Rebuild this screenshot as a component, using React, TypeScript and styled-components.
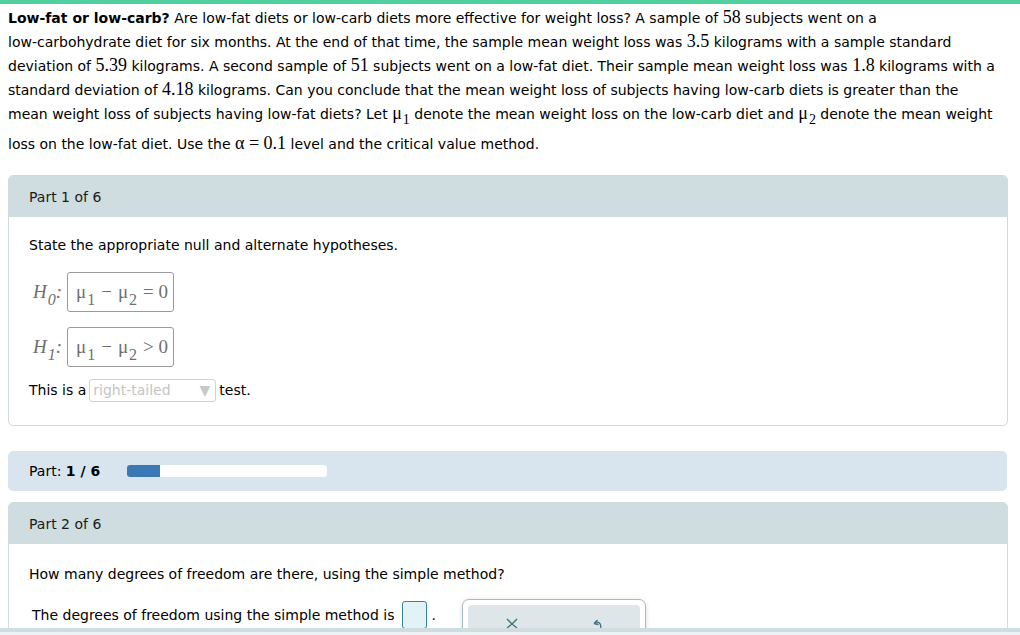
import styled, { createGlobalStyle } from "styled-components"

const GlobalStyle = createGlobalStyle`
    body {
        margin: 0;
        background: #ffffff;
        font-family: "DejaVu Sans", Verdana, sans-serif;
        font-size: 14px;
        color: #000000;
    }
`

const Page = styled.div`
    display: flex;
    flex-direction: column;
    width: 1020px;
    height: 635px;
    overflow: hidden;
`

const TopBar = styled.div`
    height: 4px;
    background: #4fd09e;
    flex-shrink: 0;
`

const Problem = styled.div`
    display: flex;
    flex-direction: column;
    padding: 1px 0 0 8px;
    line-height: 24px;
`

const TextLine = styled.div<{ $tall?: boolean }>`
    white-space: nowrap;
    height: ${(p) => (p.$tall ? 30 : 24)}px;
`

const Num = styled.span`
    font-family: "Liberation Serif", "Times New Roman", serif;
    font-size: 18px;
`

const Sub = styled.sub<{ $size?: number; $drop?: number }>`
    font-size: ${(p) => p.$size ?? 13}px;
    vertical-align: -${(p) => p.$drop ?? 5}px;
    line-height: 0;
    margin-left: 1px;
`

const Card = styled.section<{ $top: number }>`
    margin: ${(p) => p.$top}px 0 0 8px;
    width: 998px;
    border: 1px solid #cfdbdf;
    border-radius: 5px;
    flex-shrink: 0;
`

const CardHead = styled.div`
    height: 41px;
    display: flex;
    align-items: center;
    padding-left: 20px;
    background: #cfdce0;
    color: #1b1b1b;
    border-radius: 4px 4px 0 0;
`

const CardBody = styled.div`
    display: flex;
    flex-direction: column;
    align-items: flex-start;
    padding: 18px 20px 21px;
    line-height: 20px;
`

const Hyp = styled.div<{ $top: number }>`
    display: flex;
    align-items: center;
    margin-top: ${(p) => p.$top}px;
    font-family: "Liberation Serif", "Times New Roman", serif;
    font-size: 19px;
    color: #6f6f6f;
`

const HLabel = styled.span`
    width: 34px;
    padding-left: 4px;
    font-style: italic;
    white-space: nowrap;
`

const HBox = styled.div`
    display: flex;
    align-items: center;
    height: 38px;
    padding: 0 5px 0 8px;
    border: 1px solid #9a9a9a;
    border-radius: 3px;
    gap: 6px;
    white-space: nowrap;
`

const Line = styled.div<{ $top: number; $indent?: number }>`
    display: flex;
    align-items: center;
    height: 28px;
    margin-top: ${(p) => p.$top}px;
    padding-left: ${(p) => p.$indent ?? 0}px;
    white-space: nowrap;
`

const Question = styled.div`
    margin-top: 2px;
`

const Select = styled.div`
    display: flex;
    align-items: center;
    justify-content: space-between;
    width: 117px;
    height: 21px;
    margin: 0 3px 0 3px;
    padding: 0 5px 0 3px;
    border: 1px solid #d2d2d2;
    border-radius: 3px;
    color: #c4c4c4;
    font-size: 14px;
`

const Caret = styled.span`
    font-size: 14px;
    color: #c8c8c8;
`

const ProgressBar = styled.div`
    display: flex;
    align-items: center;
    margin: 25px 0 0 8px;
    width: 978px;
    height: 40px;
    padding-left: 21px;
    background: #d8e5ef;
    border-radius: 5px;
    flex-shrink: 0;
`

const Track = styled.div`
    width: 200px;
    height: 12px;
    margin-left: 27px;
    background: #ffffff;
    border-radius: 3px;
    overflow: hidden;
`

const Fill = styled.div`
    height: 100%;
    background: #3b78b5;
`

const AnswerBox = styled.div`
    width: 23px;
    height: 26px;
    margin: 0 4px 0 8px;
    border: 1px solid #2f8799;
    border-radius: 3px;
    background: #e2f3f8;
`

const Keypad = styled.div`
    align-self: flex-start;
    margin: -2px 0 0 26px;
    width: 172px;
    height: 40px;
    padding: 5px 5px 0;
    border: 1px solid #a6bcc3;
    border-radius: 7px;
    box-shadow: 0 1px 5px rgba(0, 0, 0, 0.15);
    background: #ffffff;
`

const KeyRow = styled.div`
    display: flex;
    justify-content: space-between;
    align-items: flex-start;
    height: 40px;
    padding: 13px 37px 0 38px;
    background: #dfe6e9;
    border-radius: 4px;
    color: #3f6f7c;
`

const Footer = styled.div`
    position: fixed;
    left: 0;
    right: 0;
    bottom: 0;
    height: 3px;
    border-top: 4px solid #cfdce0;
    background: #eef2f3;
`

export default function App() {
    return (
        <Page>
            <GlobalStyle />
            <TopBar />
            <Problem>
                <TextLine>
                    <b>Low-fat or low-carb?</b> Are low-fat diets or low-carb diets more effective for weight loss? A sample
                    of <Num>58</Num> subjects went on a
                </TextLine>
                <TextLine>
                    low-carbohydrate diet for six months. At the end of that time, the sample mean weight loss was{" "}
                    <Num>3.5</Num> kilograms with a sample standard
                </TextLine>
                <TextLine>
                    deviation of <Num>5.39</Num> kilograms. A second sample of <Num>51</Num> subjects went on a low-fat
                    diet. Their sample mean weight loss was <Num>1.8</Num> kilograms with a
                </TextLine>
                <TextLine>
                    standard deviation of <Num>4.18</Num> kilograms. Can you conclude that the mean weight loss of subjects
                    having low-carb diets is greater than the
                </TextLine>
                <TextLine $tall>
                    mean weight loss of subjects having low-fat diets? Let <Num>μ<Sub $size={14}>1</Sub></Num> denote the
                    mean weight loss on the low-carb diet and <Num>μ<Sub $size={14}>2</Sub></Num> denote the mean weight
                </TextLine>
                <TextLine>
                    loss on the low-fat diet. Use the <Num>α = 0.1</Num> level and the critical value method.
                </TextLine>
            </Problem>

            <Card $top={20}>
                <CardHead>Part 1 of 6</CardHead>
                <CardBody>
                    <div>State the appropriate null and alternate hypotheses.</div>
                    <Hyp $top={17}>
                        <HLabel>
                            H<Sub $size={16} $drop={7}>0</Sub>:
                        </HLabel>
                        <HBox>
                            <span>μ<Sub $size={16} $drop={7}>1</Sub></span>
                            <span>−</span>
                            <span>μ<Sub $size={16} $drop={7}>2</Sub></span>
                            <span>= 0</span>
                        </HBox>
                    </Hyp>
                    <Hyp $top={15}>
                        <HLabel>
                            H<Sub $size={16} $drop={7}>1</Sub>:
                        </HLabel>
                        <HBox>
                            <span>μ<Sub $size={16} $drop={7}>1</Sub></span>
                            <span>−</span>
                            <span>μ<Sub $size={16} $drop={7}>2</Sub></span>
                            <span>&gt; 0</span>
                        </HBox>
                    </Hyp>
                    <Line $top={9}>
                        This is a
                        <Select>
                            <span>right-tailed</span>
                            <Caret>▼</Caret>
                        </Select>
                        test.
                    </Line>
                </CardBody>
            </Card>

            <ProgressBar>
                Part:&nbsp;<b>1 / 6</b>
                <Track>
                    <Fill style={{ width: `${(1 / 6) * 100}%` }} />
                </Track>
            </ProgressBar>

            <Card $top={11}>
                <CardHead>Part 2 of 6</CardHead>
                <CardBody>
                    <Question>How many degrees of freedom are there, using the simple method?</Question>
                    <Line $top={17} $indent={3}>
                        The degrees of freedom using the simple method is
                        <AnswerBox />.
                        <Keypad>
                            <KeyRow>
                                <svg width="12" height="10" viewBox="0 0 12 10">
                                    <path d="M1 1 L6 6 L11 1 M1 10 L6 6 L11 10" stroke="currentColor" strokeWidth="1.3" fill="none" />
                                </svg>
                                <svg width="11" height="13" viewBox="0 0 11 13">
                                    <path d="M2 5.5 C5.5 2.5 10 4.5 8.5 12 M2 5.5 L5.5 2 M2 5.5 L6.5 6.5" stroke="currentColor" strokeWidth="1.3" fill="none" />
                                </svg>
                            </KeyRow>
                        </Keypad>
                    </Line>
                </CardBody>
            </Card>
            <Footer />
        </Page>
    )
}
